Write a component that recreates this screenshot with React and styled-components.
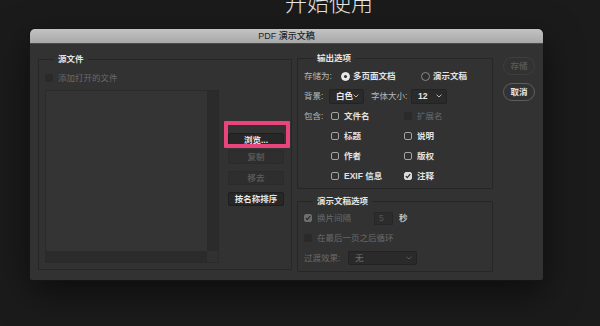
import React from "react";
import styled, { createGlobalStyle } from "styled-components";

const GlobalStyle = createGlobalStyle`
  html, body { margin: 0; padding: 0; background: #1b1b1b; }
  body {
    font-family: "Liberation Sans", "Noto Sans CJK SC", sans-serif;
    -webkit-font-smoothing: antialiased;
  }
  *, *::before, *::after { box-sizing: border-box; }
`;

const Page = styled.div`
  width: 600px;
  height: 326px;
  overflow: hidden;
  padding-left: 30px;
  display: flex;
  flex-direction: column;
  align-items: flex-start;
  background: #1b1b1b;
`;

const Heading = styled.h1`
  margin: -11px 0 0 255px;
  font: 300 22px/24px "Noto Sans CJK SC", sans-serif;
  color: #e6e6e6;
  white-space: nowrap;
`;

const Dialog = styled.section`
  margin-top: 16px;
  width: 513px;
  height: 251px;
  background: #323232;
  border-radius: 5px 5px 2px 2px;
  box-shadow: 0 0 0 1px #151515, 0 12px 36px rgba(0, 0, 0, 0.55);
  display: flex;
  flex-direction: column;
  overflow: hidden;
`;

const TitleBar = styled.header`
  flex: none;
  height: 15px;
  background: linear-gradient(#c4c3c4, #a9a8a9);
  border-bottom: 1px solid #4b4b4b;
  text-align: center;
  font-size: 9px;
  line-height: 14px;
  font-weight: 500;
  color: #242424;
`;

const Body = styled.div`
  flex: 1;
  display: flex;
  align-items: flex-start;
  padding: 8px 8px 0 8px;
`;

const Group = styled.fieldset`
  margin: ${(p) => p.$mt || 0}px 0 0 0;
  padding: ${(p) => p.$pad};
  width: ${(p) => p.$w}px;
  height: ${(p) => p.$h}px;
  border: 1px solid #262626;
  border-radius: 1px;
  min-width: 0;
`;

const Legend = styled.legend`
  margin-left: 9px;
  padding: 0 4px;
  font-size: 8.5px;
  line-height: 12px;
  font-weight: 700;
  color: #e4e4e4;
`;

const Column = styled.div`
  display: flex;
  flex-direction: column;
  margin-left: ${(p) => p.$ml || 0}px;
  margin-top: ${(p) => p.$mt || 0}px;
  gap: ${(p) => p.$gap || 0}px;
  width: ${(p) => (p.$w ? `${p.$w}px` : "auto")};
`;

const Row = styled.div`
  display: flex;
  align-items: center;
  height: 20px;
`;

const FieldLabel = styled.span`
  flex: none;
  width: ${(p) => p.$w}px;
  margin-left: ${(p) => p.$ml || 0}px;
  font-size: 8.5px;
  line-height: 12px;
  color: ${(p) => (p.$disabled ? "#6a6a6a" : "#b8b8b8")};
  white-space: nowrap;
`;

const Option = styled.label`
  display: flex;
  align-items: center;
  gap: ${(p) => (p.$gap != null ? p.$gap : 5)}px;
  height: ${(p) => p.$h || 20}px;
  width: ${(p) => (p.$w ? `${p.$w}px` : "auto")};
  font-size: 8.5px;
  line-height: 12px;
  font-weight: ${(p) => (p.$disabled ? 400 : 700)};
  color: ${(p) => (p.$disabled ? "#6a6a6a" : "#e2e2e2")};
  white-space: nowrap;
`;

const OptionText = styled.span`
  width: ${(p) => (p.$w ? `${p.$w}px` : "auto")};
`;

const BoxShape = styled.span`
  flex: none;
  width: 8px;
  height: 8px;
  border-radius: 2px;
  display: flex;
  align-items: center;
  justify-content: center;
  background: ${(p) =>
    ({ off: "#323232", disabled: "#2a2a2a", checked: "#dadada", disabledChecked: "#6e6e6e" })[p.$kind]};
  border: 1px solid
    ${(p) =>
      ({ off: "#a4a4a4", disabled: "#2a2a2a", checked: "#dadada", disabledChecked: "#6e6e6e" })[p.$kind]};
`;

const CheckBox = ({ kind }) => (
  <BoxShape $kind={kind}>
    {(kind === "checked" || kind === "disabledChecked") && (
      <svg width="6" height="6" viewBox="0 0 6 6">
        <path d="M0.8 3.1 L2.3 4.6 L5.2 1.2" fill="none" stroke="#2b2b2b" strokeWidth="1.3" />
      </svg>
    )}
  </BoxShape>
);

const RadioShape = styled.span`
  flex: none;
  width: 9px;
  height: 9px;
  border-radius: 50%;
  display: flex;
  align-items: center;
  justify-content: center;
  background: ${(p) => (p.$on ? "#e8e8e8" : "#2e2e2e")};
  border: 1px solid ${(p) => (p.$on ? "#e8e8e8" : "#8a8a8a")};
  &::after {
    content: "";
    display: ${(p) => (p.$on ? "block" : "none")};
    width: 3px;
    height: 3px;
    border-radius: 50%;
    background: #2f2f2f;
  }
`;

const SelectBox = styled.div`
  flex: none;
  display: flex;
  align-items: center;
  justify-content: space-between;
  width: ${(p) => p.$w}px;
  height: ${(p) => p.$h || 15}px;
  padding: 0 4px 0 6px;
  background: #2a2a2a;
  border: 1px solid #232323;
  border-radius: 2px;
  font-size: 8.5px;
  line-height: 12px;
  font-weight: ${(p) => (p.$disabled ? 400 : 700)};
  color: ${(p) => (p.$disabled ? "#707070" : "#e8e8e8")};
`;

const Select = ({ w, h, disabled, children }) => (
  <SelectBox $w={w} $h={h} $disabled={disabled}>
    <span>{children}</span>
    <svg width="6" height="4" viewBox="0 0 6 4">
      <path d="M0.6 0.7 L3 3 L5.4 0.7" fill="none" stroke={disabled ? "#5a5a5a" : "#b8b8b8"} strokeWidth="1" />
    </svg>
  </SelectBox>
);

const NumberField = styled.div`
  flex: none;
  margin-left: 5px;
  width: 19px;
  height: 13px;
  padding-left: 4px;
  background: #2c2c2c;
  border: 1px solid #272727;
  font-size: 8.5px;
  line-height: 11px;
  color: #555;
`;

const Unit = styled.span`
  margin-left: 6px;
  font-size: 8.5px;
  line-height: 12px;
  font-weight: 700;
  color: #c4c4c4;
`;

const IncludeGrid = styled.div`
  display: grid;
  grid-template-columns: 27px 73px auto;
  grid-auto-rows: 20px;
  align-items: center;
`;

const ListRow = styled.div`
  display: flex;
  gap: 9px;
  margin-top: 6px;
`;

const ListBox = styled.div`
  width: 174px;
  height: 173px;
  display: grid;
  grid-template-columns: 1fr 11px;
  grid-template-rows: 1fr 11px;
  border: 1px solid #2a2a2a;
  background: #343434;
`;

const ListArea = styled.div`
  background: #343434;
`;

const Track = styled.div`
  background: ${(p) => (p.$corner ? "#313131" : "#2b2b2b")};
`;

const SideButtons = styled.div`
  display: flex;
  flex-direction: column;
  gap: 7px;
  padding-top: 39px;
`;

const Button = styled.button`
  width: 56px;
  height: 14px;
  padding: 0;
  margin: 0;
  background: ${(p) => (p.disabled ? "#2e2e2e" : "#272727")};
  border: 1px solid ${(p) => (p.disabled ? "#2b2b2b" : "#1e1e1e")};
  border-radius: 2px;
  font-family: inherit;
  font-size: 8.5px;
  line-height: 12px;
  font-weight: 700;
  color: ${(p) => (p.disabled ? "#575757" : "#e6e6e6")};
`;

const HighlightWrap = styled.div`
  position: relative;
  width: 56px;
  height: 14px;
`;

const Highlight = styled.div`
  position: absolute;
  left: -4px;
  top: -8px;
  right: -6px;
  bottom: -5px;
  border: 4px solid #e9457c;
  border-radius: 1px;
  pointer-events: none;
`;

const PillButton = styled.button`
  width: 32px;
  height: 18px;
  padding: 0;
  margin: 0;
  background: transparent;
  border: 1px solid ${(p) => (p.disabled ? "#3e3e3e" : "#5e5e5e")};
  border-radius: 9px;
  font-family: inherit;
  font-size: 8.5px;
  line-height: 12px;
  font-weight: 700;
  color: ${(p) => (p.disabled ? "#555" : "#e4e4e4")};
`;

export default function App() {
  return (
    <>
      <GlobalStyle />
      <Page>
        <Heading>开始使用</Heading>
        <Dialog>
          <TitleBar>PDF 演示文稿</TitleBar>
          <Body>
            <Group $w={254} $h={217} $mt={1} $pad="7px 7px 6px 6px">
              <Legend>源文件</Legend>
              <Option $disabled $h={12}>
                <CheckBox kind="disabled" />
                添加打开的文件
              </Option>
              <ListRow>
                <ListBox>
                  <ListArea />
                  <Track />
                  <Track />
                  <Track $corner />
                </ListBox>
                <SideButtons>
                  <HighlightWrap>
                    <Button>浏览...</Button>
                    <Highlight />
                  </HighlightWrap>
                  <Button disabled>复制</Button>
                  <Button disabled>移去</Button>
                  <Button>按名称排序</Button>
                </SideButtons>
              </ListRow>
            </Group>

            <Column $ml={5} $w={196}>
              <Group $w={196} $h={137} $pad="2px 6px 2px 6px">
                <Legend>输出选项</Legend>
                <Row>
                  <FieldLabel $w={37}>存储为:</FieldLabel>
                  <Option $w={80} $gap={3}>
                    <RadioShape $on />
                    多页面文档
                  </Option>
                  <Option $gap={3}>
                    <RadioShape />
                    演示文稿
                  </Option>
                </Row>
                <Row>
                  <FieldLabel $w={25}>背景:</FieldLabel>
                  <Select w={35}>白色</Select>
                  <FieldLabel $w={40} $ml={7}>字体大小:</FieldLabel>
                  <Select w={36}>12</Select>
                </Row>
                <IncludeGrid>
                  <FieldLabel $w={27}>包含:</FieldLabel>
                  <Option>
                    <CheckBox kind="off" />
                    文件名
                  </Option>
                  <Option $disabled>
                    <CheckBox kind="disabled" />
                    扩展名
                  </Option>
                  <span />
                  <Option>
                    <CheckBox kind="off" />
                    标题
                  </Option>
                  <Option>
                    <CheckBox kind="off" />
                    说明
                  </Option>
                  <span />
                  <Option>
                    <CheckBox kind="off" />
                    作者
                  </Option>
                  <Option>
                    <CheckBox kind="off" />
                    版权
                  </Option>
                  <span />
                  <Option>
                    <CheckBox kind="off" />
                    EXIF 信息
                  </Option>
                  <Option>
                    <CheckBox kind="checked" />
                    注释
                  </Option>
                </IncludeGrid>
              </Group>

              <Group $w={196} $h={77} $mt={6} $pad="1px 6px 3px 6px">
                <Legend>演示文稿选项</Legend>
                <Row>
                  <Option $disabled>
                    <CheckBox kind="disabledChecked" />
                    <OptionText $w={52}>换片间隔</OptionText>
                  </Option>
                  <NumberField>5</NumberField>
                  <Unit>秒</Unit>
                </Row>
                <Row>
                  <Option $disabled>
                    <CheckBox kind="disabled" />
                    在最后一页之后循环
                  </Option>
                </Row>
                <Row>
                  <FieldLabel $w={44} $disabled>过渡效果:</FieldLabel>
                  <Select w={69} h={14} disabled>无</Select>
                </Row>
              </Group>
            </Column>

            <Column $ml={10} $mt={5} $gap={8}>
              <PillButton disabled>存储</PillButton>
              <PillButton>取消</PillButton>
            </Column>
          </Body>
        </Dialog>
      </Page>
    </>
  );
}
